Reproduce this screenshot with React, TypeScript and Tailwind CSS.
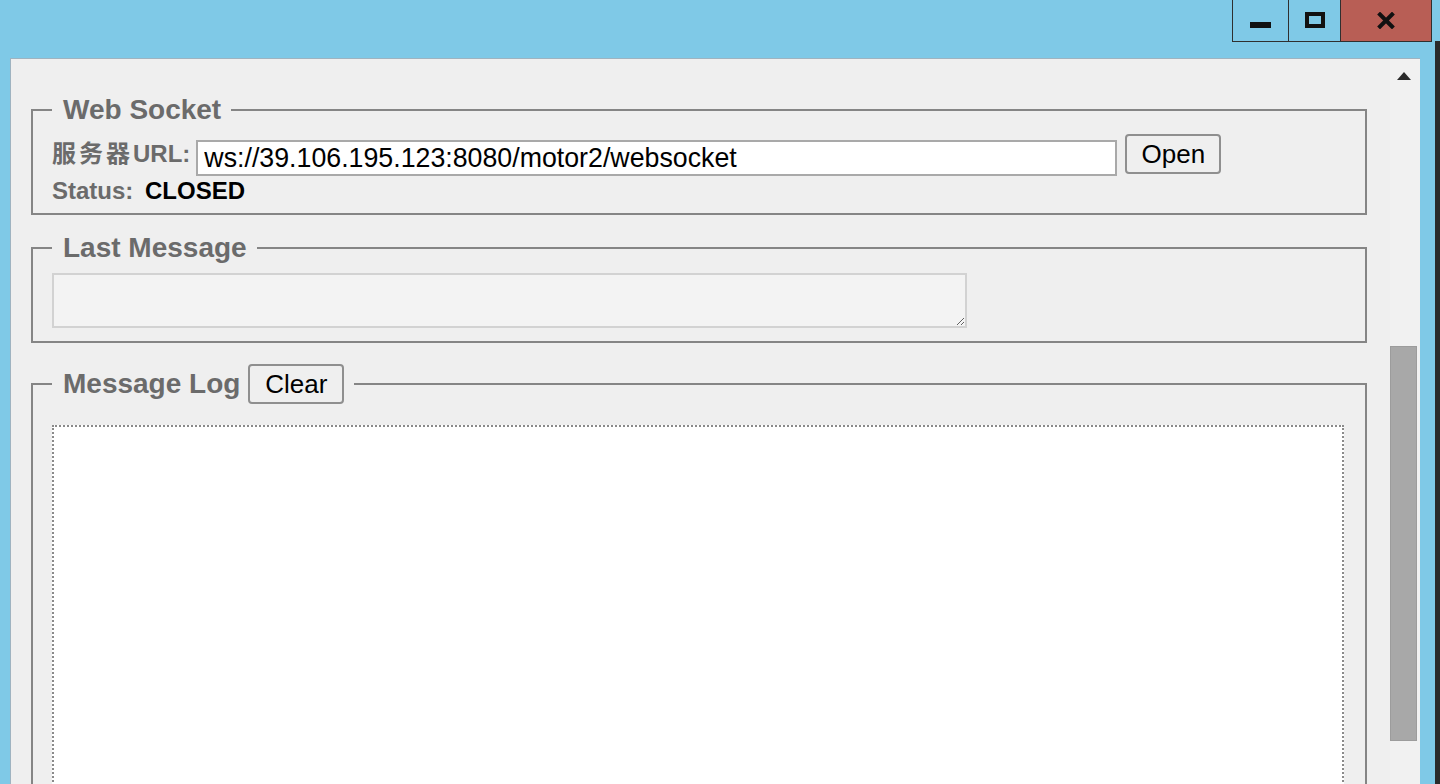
const sans = "font-['Liberation_Sans','Noto_Sans_CJK_SC',Arial,sans-serif]";

function TitleButtons() {
  return (
    <div className="flex h-[42px] border-x border-b border-[#2f2f2f]">
      <div className="flex w-[56px] items-center justify-center border-r border-[#2f2f2f] pt-[8px]">
        <span className="h-[6px] w-[21px] bg-[#111]" />
      </div>
      <div className="flex w-[52px] items-center justify-center border-r border-[#2f2f2f]">
        <span className="mt-[-2px] h-[16px] w-[20px] border-[4px] border-[#111]" />
      </div>
      <div className="flex w-[90px] items-center justify-center bg-[#b85e55]">
        <svg width="18" height="17" viewBox="0 0 18 17" className="mt-[-1px]">
          <path d="M3 2.5 L15 14.5 M15 2.5 L3 14.5" stroke="#111" strokeWidth="4" strokeLinecap="square" />
        </svg>
      </div>
    </div>
  );
}

function Btn({ label }: { label: string }) {
  return (
    <button
      type="button"
      className={`${sans} h-[40px] w-[96px] rounded-[4px] border-2 border-[#8f8f8f] bg-[#efefef] text-[26px] leading-none text-black`}
    >
      {label}
    </button>
  );
}

export default function App() {
  return (
    <div className="flex h-[784px] w-[1440px] flex-col overflow-hidden bg-[#7fc9e7]">
      <div className="flex h-[41px] shrink-0 justify-end pr-[8px]">
        <TitleButtons />
      </div>

      <div className="flex min-h-0 flex-1 border-r-[5px] border-[#2a2a2a] pl-[10px] pr-[15px] pt-[17px]">
        <div className="flex min-w-0 flex-1 border-l border-t border-[#9fb3c0] bg-[#efefef]">
          <div className={`${sans} min-w-0 flex-1 pl-[20px] pr-[23px] pt-[37px]`}>
            {/* Web Socket */}
            <fieldset className="border-2 border-[#858585] pb-[10px] pl-[19px] pr-[21px] pt-[10px]">
              <legend className="pl-[11px] pr-[10px] text-[28px] font-bold leading-[28px] text-[#6b6b6b]">
                Web Socket
              </legend>
              <div className="flex items-start">
                <span className="h-[40px] text-[24px] font-bold leading-[40px] text-[#6b6b6b]">
                  <span className="tracking-[3px]">服务器</span>URL:
                </span>
                <input
                  readOnly
                  value="ws://39.106.195.123:8080/motor2/websocket"
                  className="ml-[6px] mt-[6px] h-[36px] w-[921px] border-2 border-[#a9a9a9] bg-white px-[6px] text-[26.75px] leading-none text-black outline-none"
                />
                <div className="ml-[8px]">
                  <Btn label="Open" />
                </div>
              </div>
              <div className="mt-[3px] text-[24px] font-bold leading-[24px] text-[#6b6b6b]">
                Status: <span className="ml-[5px] text-black">CLOSED</span>
              </div>
            </fieldset>

            {/* Last Message */}
            <fieldset className="mt-[19px] border-2 border-[#858585] pb-[13px] pl-[19px] pr-[21px] pt-[11px]">
              <legend className="pl-[11px] pr-[10px] text-[28px] font-bold leading-[28px] text-[#6b6b6b]">
                Last Message
              </legend>
              <textarea
                readOnly
                className="block h-[55px] w-[915px] border-2 border-[#d2d2d2] bg-[#f3f3f3] outline-none"
              />
            </fieldset>

            {/* Message Log */}
            <fieldset className="mt-[21px] border-2 border-[#858585] pl-[19px] pr-[21px] pt-[21px]">
              <legend className="flex items-center pl-[11px] pr-[10px]">
                <span className="text-[28px] font-bold leading-[28px] text-[#6b6b6b]">Message Log</span>
                <span className="ml-[8px]">
                  <Btn label="Clear" />
                </span>
              </legend>
              <div className="h-[420px] border-2 border-dotted border-[#8a8a8a] bg-white" />
            </fieldset>
          </div>

          {/* scrollbar */}
          <div className="flex w-[30px] shrink-0 flex-col bg-[#f1f1f1]">
            <div className="flex justify-center pr-[3px] pt-[13px]">
              <svg width="14" height="8" viewBox="0 0 14 8">
                <path d="M7 0 L14 8 L0 8 Z" fill="#2a2a2a" />
              </svg>
            </div>
            <div className="mt-[266px] h-[395px] w-[27px] border border-[#9c9c9c] bg-[#a8a8a8]" />
          </div>
        </div>
      </div>
    </div>
  );
}
